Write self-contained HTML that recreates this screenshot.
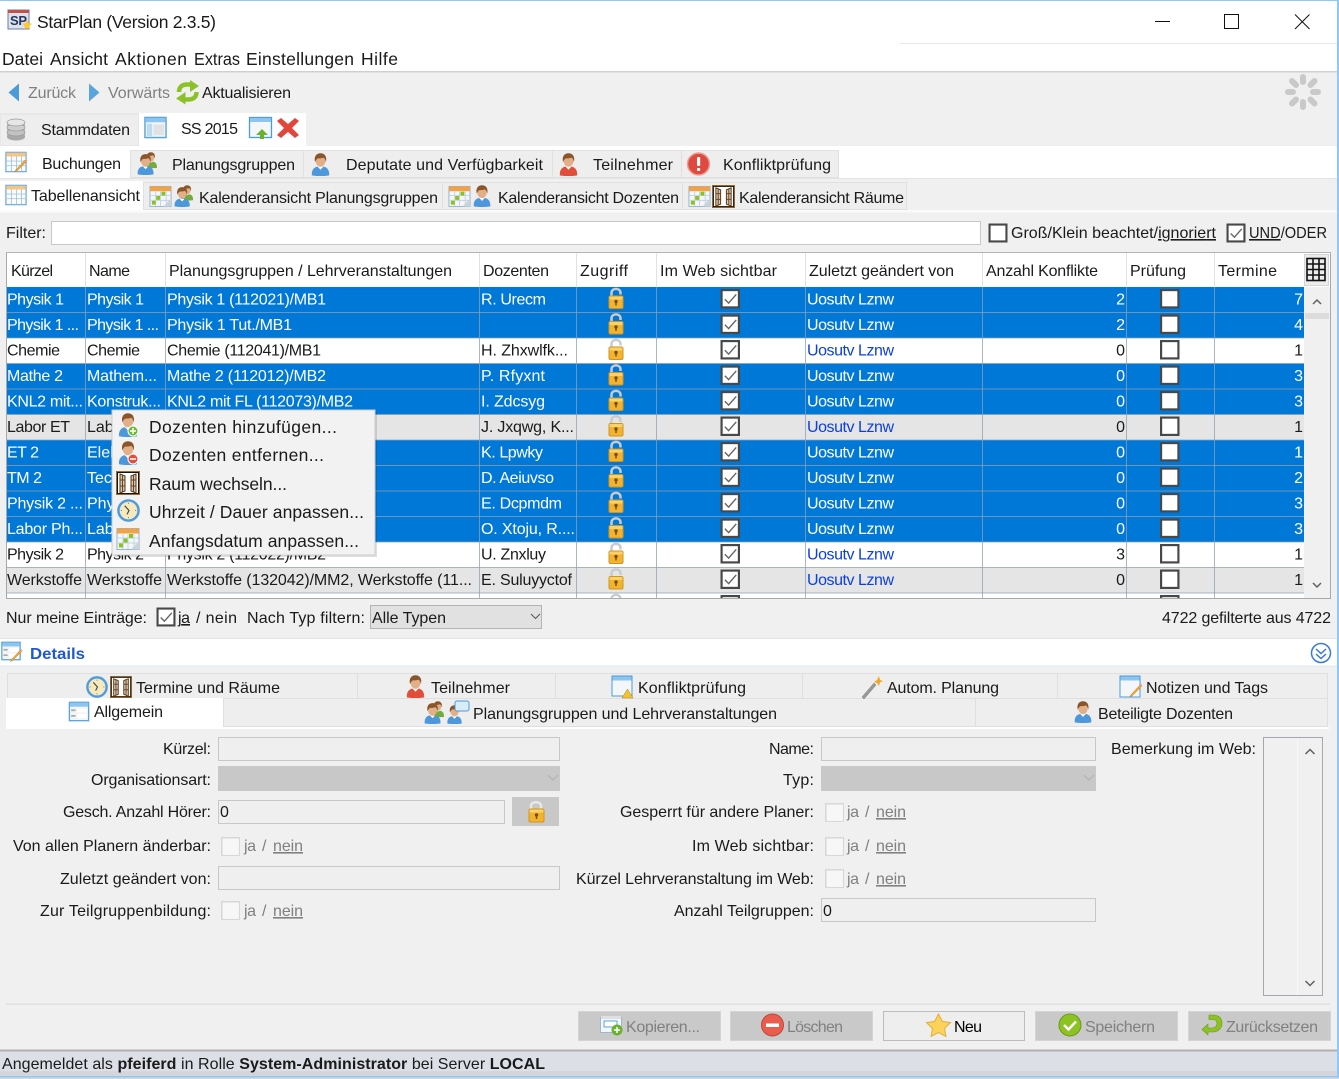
<!DOCTYPE html>
<html lang="de"><head><meta charset="utf-8"><title>StarPlan (Version 2.3.5)</title>
<style>
html,body{margin:0;padding:0;background:#f0f0f0;width:1339px;height:1079px;overflow:hidden}
svg{display:block}
text{font-family:"Liberation Sans",sans-serif;font-size:16px;fill:#1a1a1a}
.w text{fill:#fff}
.w .lk{fill:#fff}
.lk{fill:#0a3fe0}
.g{fill:#808080}
.u{text-decoration:underline}
</style></head><body>
<svg width="1339" height="1079" viewBox="0 0 1339 1079" xmlns="http://www.w3.org/2000/svg">
<defs>
<symbol id="head" viewBox="0 0 24 24"><ellipse cx="12" cy="8" rx="5.200" ry="6.300" fill="#e2b088"/><path d="M6.300 9.500C4.800 2.500 8.800 .3 12 .3s7.200 2.200 5.700 9.200c-.4-2.200-1.200-4-2.600-4.700-2 .8-4 .9-5.800.8C8 6.300 6.900 7.600 6.300 9.500z" fill="#8a5529"/></symbol>
<symbol id="pb" viewBox="0 0 24 24"><path d="M3 23.300c-.5-5.500 2.200-8.600 5.800-9.100 2 1.500 4.400 1.500 6.400 0 3.600.5 6.300 3.600 5.800 9.100-4.500 1-13.500 1-18 0z" fill="#4d98dc"/><path d="M9.300 14.500l2.700 3 2.700-3z" fill="#fff"/><use href="#head" width="24" height="24"/></symbol>
<symbol id="pr" viewBox="0 0 24 24"><path d="M3 23.300c-.5-5.500 2.200-8.600 5.800-9.100 2 1.500 4.400 1.500 6.400 0 3.600.5 6.300 3.600 5.800 9.100-4.500 1-13.500 1-18 0z" fill="#e04f3c"/><path d="M9.300 14.500l2.700 3 2.700-3z" fill="#fff"/><use href="#head" width="24" height="24"/></symbol>
<symbol id="pg" viewBox="0 0 24 24"><path d="M3 23.300c-.5-5.500 2.200-8.600 5.800-9.100 2 1.500 4.400 1.500 6.400 0 3.600.5 6.300 3.600 5.800 9.100-4.500 1-13.500 1-18 0z" fill="#74ab3c"/><use href="#head" width="24" height="24"/></symbol>
<symbol id="grp" viewBox="0 0 24 24"><use href="#pg" x="7" y="0" width="17" height="17"/><use href="#pb" x="-1" y="2" width="22" height="22"/></symbol>
<symbol id="cal" viewBox="0 0 24 24"><rect x="1" y="1.500" width="22" height="21" fill="#f4f6f8" stroke="#8fb4d4"/><rect x="1" y="1.500" width="22" height="5" fill="#f2a244"/><path d="M1 11h22M1 16h22M7 6v16M12 6v16M18 6v16" stroke="#c4d4e4" fill="none"/><rect x="7.500" y="11.500" width="4" height="4" fill="#8cc21e"/><rect x="13" y="7" width="4" height="4" fill="#8cc21e"/><rect x="3" y="16.500" width="4" height="4" fill="#8cc21e"/><path d="M23 14v8.500h-8z" fill="#c9d3da"/></symbol>
<symbol id="tbl" viewBox="0 0 24 24"><rect x="1" y="1.500" width="22" height="21" fill="#fbfcfd" stroke="#7fb0d8" stroke-width="1.500"/><rect x="1.500" y="2" width="21" height="4" fill="#f3c686"/><path d="M1 11h22M1 16h22M7 6v16M12.500 6v16M18 6v16" stroke="#a8c6e0" fill="none"/></symbol>
<symbol id="win" viewBox="0 0 24 24"><rect x="1" y="1.500" width="22" height="21" fill="#f2f4f6" stroke="#5aa4dc" stroke-width="1.500"/><rect x="1.500" y="2" width="21" height="4.500" fill="#8cc6f0"/><rect x="3" y="8" width="5.500" height="13" fill="#bcdcf4"/><rect x="10" y="9" width="11" height="11" fill="#e0e2e4"/></symbol>
<symbol id="form" viewBox="0 0 24 24"><rect x="1" y="1.500" width="22" height="21" fill="#f2f4f6" stroke="#5aa4dc" stroke-width="1.500"/><rect x="1.500" y="2" width="21" height="4.500" fill="#8cc6f0"/><rect x="10" y="8.500" width="11" height="4.500" fill="#fff"/><rect x="10" y="15" width="11" height="4.500" fill="#fff"/><path d="M3 10.500h5M3 17h5" stroke="#aaa" stroke-width="2"/></symbol>
<symbol id="door" viewBox="0 0 24 24"><rect x="1" y="1" width="22" height="22" fill="#fff" stroke="#141414" stroke-width="2"/><rect x=".5" y=".5" width="23" height="23" fill="none" stroke="#9c6a2a"/><path d="M4 3l5 2v15l-5 2zM20 3l-5 2v15l5 2z" fill="#d4c4b0" stroke="#5a3414"/><path d="M6.500 4v17M17.500 4v17M4 9h5M4 15h5M15 9h5M15 15h5" stroke="#6a4420"/></symbol>
<symbol id="clk" viewBox="0 0 24 24"><circle cx="12" cy="12" r="10.500" fill="#f6e9bc" stroke="#4f9be0" stroke-width="2.600"/><path d="M8 7l4.500 5-2 4" stroke="#444" stroke-width="1.200" fill="none"/><circle cx="12" cy="4.500" r=".6" fill="#777"/><circle cx="19.500" cy="12" r=".6" fill="#777"/><circle cx="12" cy="19.500" r=".6" fill="#777"/><circle cx="4.500" cy="12" r=".6" fill="#777"/></symbol>
<symbol id="lock" viewBox="0 0 16 22"><path d="M3.500 10V6c0-5.500 9-5.500 9 0v1.500" fill="none" stroke="#c8ccd0" stroke-width="2.500"/><rect x="1" y="9" width="14" height="12.500" rx="1.500" fill="#f2b32e" stroke="#d29320"/><rect x="1.500" y="9.500" width="13" height="3" fill="#fad26a"/><circle cx="8" cy="14.500" r="1.700" fill="#7a4a08"/><rect x="7.300" y="15" width="1.400" height="3.500" fill="#7a4a08"/></symbol>
<symbol id="cb" viewBox="0 0 18 18"><rect x="1" y="1" width="16" height="16" fill="#fff" stroke="#484848" stroke-width="2"/></symbol>
<symbol id="cc" viewBox="0 0 18 18"><rect x="1" y="1" width="16" height="16" fill="#fff" stroke="#484848" stroke-width="2"/><path d="M4 9.500l3.500 3.500 7-8" fill="none" stroke="#666" stroke-width="1.300"/></symbol>
<symbol id="cd" viewBox="0 0 18 18"><rect x=".75" y=".75" width="17" height="17" fill="#f7f7f7" stroke="#d8d8d8" stroke-width="1.500"/></symbol>
<symbol id="pen" viewBox="0 0 24 24"><path d="M8 21l-2 3 3.500-1.500L22 10l-2-2z" fill="#f4a62e" stroke="#b87818" stroke-width=".6"/><path d="M20 8l2 2 1.500-1.500-2-2z" fill="#e8a0c8"/></symbol>
</defs>

<!-- window chrome -->
<rect width="1339" height="1079" fill="#f0f0f0"/>
<rect y="1" width="1337" height="70" fill="#fff"/>
<rect x="900" y="43" width="437" height="1" fill="#e8e8e8"/>
<rect y="71" width="1337" height="1.500" fill="#cfcfcf"/>
<rect width="1339" height="1" fill="#8cc8fa"/>
<rect x="1337" y="0" width="2" height="1079" fill="#8cc8fa"/>

<!-- title -->
<rect x="8" y="10" width="21" height="19" fill="#dde3ee" stroke="#6c7da0"/>
<rect x="8" y="10" width="21" height="3" fill="#c4504a"/>
<text x="10" y="25" style="font-size:13px;font-weight:bold;fill:#28365e" textLength="17">SP</text>
<path d="M27 20l1.600 3.200 3.400.4-2.500 2.300.7 3.400-3.200-1.700-3 1.700.6-3.400-2.500-2.300 3.400-.4z" fill="#fac832"/>
<text x="37" y="28" style="font-size:17.500px" textLength="179">StarPlan (Version 2.3.5)</text>
<path d="M1155 21.500h15" stroke="#111" fill="none"/>
<rect x="1224.500" y="14.500" width="14" height="14" fill="none" stroke="#111"/>
<path d="M1295 14.500l14.500 14.500M1309.500 14.500l-14.500 14.500" stroke="#111" fill="none"/>

<!-- menu -->
<text x="2" y="65" textLength="41" style="font-size:17.500px">Datei</text>
<text x="50" y="65" textLength="58" style="font-size:17.500px">Ansicht</text>
<text x="115" y="65" textLength="72" style="font-size:17.500px">Aktionen</text>
<text x="194" y="65" textLength="46" lengthAdjust="spacingAndGlyphs" style="font-size:17.500px">Extras</text>
<text x="246" y="65" textLength="108" style="font-size:17.500px">Einstellungen</text>
<text x="361" y="65" textLength="37" style="font-size:17.500px">Hilfe</text>

<!-- toolbar -->
<path d="M19 83.500v18L8.500 92.500z" fill="#4c9bd8"/>
<text x="28" y="98" class="g" textLength="48">Zurück</text>
<path d="M89 83.500v18l10.500-9z" fill="#5ba5de"/>
<text x="108" y="98" class="g" textLength="62">Vorwärts</text>
<path d="M179 92c0-5 3-7.500 8-7.500h4" fill="none" stroke="#8cc228" stroke-width="4.500"/>
<path d="M190 80l9 6-9 6z" fill="#8cc228"/>
<path d="M196.500 92c0 5-3 7.500-8 7.500h-4" fill="none" stroke="#8cc228" stroke-width="4.500"/>
<path d="M185.500 92l-9.500 6.500 9.500 6z" fill="#8cc228"/>
<text x="202" y="98" textLength="89">Aktualisieren</text>
<g stroke="#c9c9c9" stroke-width="6" stroke-linecap="round" fill="none">
<path d="M1303 77v5M1303 102v5M1288 92h5M1313 92h5M1292 81l4 4M1310.500 99.500l4 4M1292 103.500l4-4M1310.500 85l4-4"/>
</g>

<!-- tab row 1 -->
<rect x="0" y="114" width="139" height="32" fill="#eee" stroke="#e0e0e0"/>
<rect x="139" y="113" width="167" height="33" fill="#fff"/>
<rect x="7" y="123" width="18" height="14" fill="#b8b8b8"/>
<ellipse cx="16" cy="137" rx="9" ry="3.500" fill="#a8a8a8"/>
<ellipse cx="16" cy="132.500" rx="9" ry="3.500" fill="#c2c2c2" stroke="#999" stroke-width=".7"/>
<ellipse cx="16" cy="127.500" rx="9" ry="3.500" fill="#cdcdcd" stroke="#999" stroke-width=".7"/>
<ellipse cx="16" cy="122.500" rx="9" ry="3.500" fill="#e6e6e6" stroke="#999" stroke-width=".7"/>
<text x="41" y="135" textLength="89">Stammdaten</text>
<use href="#win" x="144" y="116" width="23" height="23"/>
<text x="181" y="134" textLength="57">SS 2015</text>
<rect x="249.500" y="117.500" width="22" height="20" fill="#f4f7fa" stroke="#4d9bdc" stroke-width="1.300"/><rect x="250" y="118" width="21" height="4" fill="#8cc6f0"/><path d="M260 139v-4h-4l6-6 6 6h-4v4z" fill="#6cb12e"/>
<path d="M281 118l7 6 7-6 4 3-7 7 7 7-4 3-7-6-7 6-4-3 7-7-7-7z" fill="#e0463c"/>

<!-- tab row 2 -->
<rect x="0" y="146" width="1337" height="32" fill="#fff"/>
<rect x="0" y="178" width="1337" height="1" fill="#e4e4e4"/>
<g fill="#eee" stroke="#e0e0e0">
<rect x="130.500" y="150.500" width="173" height="27"/><rect x="303.500" y="150.500" width="249" height="27"/><rect x="552.500" y="150.500" width="129" height="27"/><rect x="681.500" y="150.500" width="157" height="27"/>
</g>
<use href="#tbl" x="5" y="151" width="22" height="22"/><use href="#pen" x="10" y="152" width="18" height="22"/>
<text x="42" y="169" textLength="79">Buchungen</text>
<use href="#grp" x="136" y="152" width="23" height="23"/>
<text x="172" y="170" textLength="123">Planungsgruppen</text>
<use href="#pb" x="309" y="153" width="23" height="23"/>
<text x="346" y="170" textLength="197">Deputate und Verfügbarkeit</text>
<use href="#pr" x="557" y="153" width="23" height="23"/>
<text x="593" y="170" textLength="80">Teilnehmer</text>
<circle cx="698.500" cy="164" r="11" fill="#e0493e" stroke="#e8a098" stroke-width="1.500"/><rect x="697" y="157" width="3.200" height="9" rx="1" fill="#fff"/><rect x="697" y="168" width="3.200" height="3" rx="1" fill="#fff"/>
<text x="723" y="170" textLength="108">Konfliktprüfung</text>

<!-- tab row 3 -->
<rect x="0" y="181" width="143" height="29" fill="#fff"/>
<g fill="#eee" stroke="#e0e0e0">
<rect x="143.500" y="182.500" width="299" height="27"/><rect x="442.500" y="182.500" width="240" height="27"/><rect x="682.500" y="182.500" width="224" height="27"/>
</g>
<rect y="210" width="1337" height="2.500" fill="#fafafa"/>
<use href="#tbl" x="5" y="184" width="22" height="22"/>
<text x="31" y="201" textLength="109">Tabellenansicht</text>
<use href="#cal" x="149" y="185" width="23" height="23"/><use href="#grp" x="173" y="185" width="22" height="22"/>
<text x="199" y="203" textLength="239">Kalenderansicht Planungsgruppen</text>
<use href="#cal" x="448" y="185" width="23" height="23"/><use href="#pb" x="471" y="185" width="22" height="22"/>
<text x="498" y="203" textLength="181">Kalenderansicht Dozenten</text>
<use href="#cal" x="688" y="185" width="23" height="23"/><use href="#door" x="712" y="185" width="23" height="23"/>
<text x="739" y="203" textLength="165">Kalenderansicht Räume</text>

<!-- filter -->
<text x="6" y="238" textLength="40">Filter:</text>
<rect x="51.500" y="221.500" width="929" height="23" fill="#fff" stroke="#c8c8c8"/>
<use href="#cb" x="988.500" y="223.500" width="19" height="19"/>
<text x="1011" y="238" textLength="205">Groß/Klein beachtet/<tspan class="u">ignoriert</tspan></text>
<use href="#cc" x="1226.500" y="223.500" width="19" height="19"/>
<text x="1249" y="238" textLength="78" lengthAdjust="spacingAndGlyphs"><tspan class="u">UND</tspan>/ODER</text>

<!-- table -->
<rect x="6" y="252.500" width="1325" height="346" fill="#fff"/>
<rect x="6" y="253" width="1298" height="34" fill="#fff"/>
<g stroke="#e2e2e2"><path d="M85.500 253v34M165.500 253v34M479.500 253v34M576.500 253v34M656.500 253v34M805.500 253v34M982.500 253v34M1126.500 253v34M1214.500 253v34"/></g>
<text x="11" y="276" textLength="42">Kürzel</text>
<text x="89" y="276" textLength="41">Name</text>
<text x="169" y="276" textLength="283">Planungsgruppen / Lehrveranstaltungen</text>
<text x="483" y="276" textLength="66">Dozenten</text>
<text x="580" y="276" textLength="48">Zugriff</text>
<text x="660" y="276" textLength="117">Im Web sichtbar</text>
<text x="809" y="276" textLength="145">Zuletzt geändert von</text>
<text x="986" y="276" textLength="112">Anzahl Konflikte</text>
<text x="1130" y="276" textLength="56">Prüfung</text>
<text x="1218" y="276" textLength="59">Termine</text>

<!-- rows -->
<g transform="translate(0,287)" class="w"><rect x="7" width="1297" height="25.500" fill="#0078d7"/><text x="7" y="17.500" textLength="57">Physik 1</text><text x="87" y="17.500" textLength="57">Physik 1</text><text x="167" y="17.500" textLength="159">Physik 1 (112021)/MB1</text><text x="481" y="17.500" textLength="65">R. Urecm</text><use href="#lock" x="608" y="0" width="16" height="22"/><use href="#cc" x="720.500" y="2" width="19.500" height="19.500"/><text x="807" y="17.500" class="lk" textLength="87">Uosutv Lznw</text><text x="1125" y="17.500" text-anchor="end">2</text><use href="#cb" x="1160" y="2" width="19.500" height="19.500"/><text x="1303" y="17.500" text-anchor="end">7</text></g>
<g transform="translate(0,312.500)" class="w"><rect x="7" width="1297" height="25.500" fill="#0078d7"/><text x="7" y="17.500" textLength="72">Physik 1 ...</text><text x="87" y="17.500" textLength="72">Physik 1 ...</text><text x="167" y="17.500" textLength="125">Physik 1 Tut./MB1</text><use href="#lock" x="608" y="0" width="16" height="22"/><use href="#cc" x="720.500" y="2" width="19.500" height="19.500"/><text x="807" y="17.500" class="lk" textLength="87">Uosutv Lznw</text><text x="1125" y="17.500" text-anchor="end">2</text><use href="#cb" x="1160" y="2" width="19.500" height="19.500"/><text x="1303" y="17.500" text-anchor="end">4</text></g>
<g transform="translate(0,338)"><rect x="7" width="1297" height="25.500" fill="#fff"/><text x="7" y="17.500" textLength="53">Chemie</text><text x="87" y="17.500" textLength="53">Chemie</text><text x="167" y="17.500" textLength="154">Chemie (112041)/MB1</text><text x="481" y="17.500" textLength="87">H. Zhxwlfk...</text><use href="#lock" x="608" y="0" width="16" height="22"/><use href="#cc" x="720.500" y="2" width="19.500" height="19.500"/><text x="807" y="17.500" class="lk" textLength="87">Uosutv Lznw</text><text x="1125" y="17.500" text-anchor="end">0</text><use href="#cb" x="1160" y="2" width="19.500" height="19.500"/><text x="1303" y="17.500" text-anchor="end">1</text></g>
<g transform="translate(0,363.500)" class="w"><rect x="7" width="1297" height="25.500" fill="#0078d7"/><text x="7" y="17.500" textLength="56">Mathe 2</text><text x="87" y="17.500" textLength="70">Mathem...</text><text x="167" y="17.500" textLength="159">Mathe 2 (112012)/MB2</text><text x="481" y="17.500" textLength="64">P. Rfyxnt</text><use href="#lock" x="608" y="0" width="16" height="22"/><use href="#cc" x="720.500" y="2" width="19.500" height="19.500"/><text x="807" y="17.500" class="lk" textLength="87">Uosutv Lznw</text><text x="1125" y="17.500" text-anchor="end">0</text><use href="#cb" x="1160" y="2" width="19.500" height="19.500"/><text x="1303" y="17.500" text-anchor="end">3</text></g>
<g transform="translate(0,389)" class="w"><rect x="7" width="1297" height="25.500" fill="#0078d7"/><text x="7" y="17.500" textLength="76">KNL2 mit...</text><text x="87" y="17.500" textLength="74">Konstruk...</text><text x="167" y="17.500" textLength="186">KNL2 mit FL (112073)/MB2</text><text x="481" y="17.500" textLength="64">I. Zdcsyg</text><use href="#lock" x="608" y="0" width="16" height="22"/><use href="#cc" x="720.500" y="2" width="19.500" height="19.500"/><text x="807" y="17.500" class="lk" textLength="87">Uosutv Lznw</text><text x="1125" y="17.500" text-anchor="end">0</text><use href="#cb" x="1160" y="2" width="19.500" height="19.500"/><text x="1303" y="17.500" text-anchor="end">3</text></g>
<g transform="translate(0,414.500)"><rect x="7" width="1297" height="25.500" fill="#e5e5e5"/><text x="7" y="17.500" textLength="63">Labor ET</text><text x="87" y="17.500">Lab</text><text x="481" y="17.500" textLength="93">J. Jxqwg, K...</text><use href="#lock" x="608" y="0" width="16" height="22"/><use href="#cc" x="720.500" y="2" width="19.500" height="19.500"/><text x="807" y="17.500" class="lk" textLength="87">Uosutv Lznw</text><text x="1125" y="17.500" text-anchor="end">0</text><use href="#cb" x="1160" y="2" width="19.500" height="19.500"/><text x="1303" y="17.500" text-anchor="end">1</text></g>
<g transform="translate(0,440)" class="w"><rect x="7" width="1297" height="25.500" fill="#0078d7"/><text x="7" y="17.500" textLength="32">ET 2</text><text x="87" y="17.500">Elek</text><text x="481" y="17.500" textLength="62">K. Lpwky</text><use href="#lock" x="608" y="0" width="16" height="22"/><use href="#cc" x="720.500" y="2" width="19.500" height="19.500"/><text x="807" y="17.500" class="lk" textLength="87">Uosutv Lznw</text><text x="1125" y="17.500" text-anchor="end">0</text><use href="#cb" x="1160" y="2" width="19.500" height="19.500"/><text x="1303" y="17.500" text-anchor="end">1</text></g>
<g transform="translate(0,465.500)" class="w"><rect x="7" width="1297" height="25.500" fill="#0078d7"/><text x="7" y="17.500" textLength="35">TM 2</text><text x="87" y="17.500">Tec</text><text x="481" y="17.500" textLength="73">D. Aeiuvso</text><use href="#lock" x="608" y="0" width="16" height="22"/><use href="#cc" x="720.500" y="2" width="19.500" height="19.500"/><text x="807" y="17.500" class="lk" textLength="87">Uosutv Lznw</text><text x="1125" y="17.500" text-anchor="end">0</text><use href="#cb" x="1160" y="2" width="19.500" height="19.500"/><text x="1303" y="17.500" text-anchor="end">2</text></g>
<g transform="translate(0,491)" class="w"><rect x="7" width="1297" height="25.500" fill="#0078d7"/><text x="7" y="17.500" textLength="76">Physik 2 ...</text><text x="87" y="17.500">Phy</text><text x="481" y="17.500" textLength="81">E. Dcpmdm</text><use href="#lock" x="608" y="0" width="16" height="22"/><use href="#cc" x="720.500" y="2" width="19.500" height="19.500"/><text x="807" y="17.500" class="lk" textLength="87">Uosutv Lznw</text><text x="1125" y="17.500" text-anchor="end">0</text><use href="#cb" x="1160" y="2" width="19.500" height="19.500"/><text x="1303" y="17.500" text-anchor="end">3</text></g>
<g transform="translate(0,516.500)" class="w"><rect x="7" width="1297" height="25.500" fill="#0078d7"/><text x="7" y="17.500" textLength="76">Labor Ph...</text><text x="87" y="17.500">Lab</text><text x="481" y="17.500" textLength="94">O. Xtoju, R....</text><use href="#lock" x="608" y="0" width="16" height="22"/><use href="#cc" x="720.500" y="2" width="19.500" height="19.500"/><text x="807" y="17.500" class="lk" textLength="87">Uosutv Lznw</text><text x="1125" y="17.500" text-anchor="end">0</text><use href="#cb" x="1160" y="2" width="19.500" height="19.500"/><text x="1303" y="17.500" text-anchor="end">3</text></g>
<g transform="translate(0,542)"><rect x="7" width="1297" height="25.500" fill="#fff"/><text x="7" y="17.500" textLength="57">Physik 2</text><text x="87" y="17.500" textLength="57">Physik 2</text><text x="167" y="17.500" textLength="159">Physik 2 (112022)/MB2</text><text x="481" y="17.500" textLength="65">U. Znxluy</text><use href="#lock" x="608" y="0" width="16" height="22"/><use href="#cc" x="720.500" y="2" width="19.500" height="19.500"/><text x="807" y="17.500" class="lk" textLength="87">Uosutv Lznw</text><text x="1125" y="17.500" text-anchor="end">3</text><use href="#cb" x="1160" y="2" width="19.500" height="19.500"/><text x="1303" y="17.500" text-anchor="end">1</text></g>
<g transform="translate(0,567.500)"><rect x="7" width="1297" height="25.500" fill="#e5e5e5"/><text x="7" y="17.500" textLength="75">Werkstoffe</text><text x="87" y="17.500" textLength="75">Werkstoffe</text><text x="167" y="17.500" textLength="305">Werkstoffe (132042)/MM2, Werkstoffe (11...</text><text x="481" y="17.500" textLength="91">E. Suluyyctof</text><use href="#lock" x="608" y="0" width="16" height="22"/><use href="#cc" x="720.500" y="2" width="19.500" height="19.500"/><text x="807" y="17.500" class="lk" textLength="87">Uosutv Lznw</text><text x="1125" y="17.500" text-anchor="end">0</text><use href="#cb" x="1160" y="2" width="19.500" height="19.500"/><text x="1303" y="17.500" text-anchor="end">1</text></g>
<svg x="7" y="593" width="1297" height="5" viewBox="7 593 1297 5"><use href="#lock" x="608" y="593" width="16" height="22"/><use href="#cb" x="720.500" y="595" width="19.500" height="19.500"/><use href="#cb" x="1160" y="595" width="19.500" height="19.500"/></svg>

<!-- grid lines -->
<g stroke="#8f9fb0" stroke-opacity=".75" fill="none">
<path d="M85.500 287v311M165.500 287v311M479.500 287v311M576.500 287v311M656.500 287v311M805.500 287v311M982.500 287v311M1126.500 287v311M1214.500 287v311"/>
<path d="M7 312.500h1297M7 338h1297M7 363.500h1297M7 389h1297M7 414.500h1297M7 440h1297M7 465.500h1297M7 491h1297M7 516.500h1297M7 542h1297M7 567.500h1297M7 593h1297"/>
</g>

<!-- table scrollbar + frame -->
<rect x="1304" y="287" width="26" height="311" fill="#f0f0f0"/>
<rect x="1305" y="313" width="24" height="6" fill="#dcdcdc"/>
<path d="M1313 304l4-4 4 4M1313 583l4 4 4-4" stroke="#606060" stroke-width="1.500" fill="none"/>
<rect x="1304.500" y="254.500" width="24" height="31" fill="#ececec" stroke="#d4d4d4"/>
<g stroke="#111" stroke-width="1.600" fill="none"><rect x="1307" y="258.500" width="18" height="22"/><path d="M1307 264h18M1307 269.500h18M1307 275h18M1313 258.500v22M1319 258.500v22"/></g>
<rect x="6.500" y="252.500" width="1324" height="346" fill="none" stroke="#a8a8a8"/>
<rect x="6" y="252" width="1325" height="1" fill="#b4b4b4"/>

<!-- context menu -->
<rect x="114" y="412" width="263" height="145" fill="#000" fill-opacity=".12"/>
<rect x="112" y="410" width="263" height="145" fill="#f2f2f2" stroke="#cccccc"/>
<use href="#pb" x="116" y="413" width="24" height="24"/><circle cx="133" cy="431" r="5" fill="#6cb830" stroke="#fff"/><path d="M130 431h6M133 428v6" stroke="#fff" stroke-width="1.500"/>
<text x="149" y="433" style="font-size:17.500px" textLength="188">Dozenten hinzufügen...</text>
<use href="#pb" x="116" y="441" width="24" height="24"/><circle cx="133" cy="459" r="5" fill="#e04f3c" stroke="#fff"/><path d="M130 459h6" stroke="#fff" stroke-width="1.500"/>
<text x="149" y="461" style="font-size:17.500px" textLength="175">Dozenten entfernen...</text>
<use href="#door" x="116" y="471" width="24" height="24"/>
<text x="149" y="490" style="font-size:17.500px" textLength="138">Raum wechseln...</text>
<use href="#clk" x="117" y="499" width="23" height="23"/>
<text x="149" y="518" style="font-size:17.500px" textLength="215">Uhrzeit / Dauer anpassen...</text>
<use href="#cal" x="116" y="527" width="24" height="24"/>
<text x="149" y="547" style="font-size:17.500px" textLength="210">Anfangsdatum anpassen...</text>

<!-- below table -->
<text x="6" y="623" textLength="141">Nur meine Einträge:</text>
<use href="#cc" x="156.500" y="607.500" width="19" height="19"/>
<text x="178" y="623" textLength="12" class="u">ja</text>
<text x="196" y="623" textLength="41">/ nein</text>
<text x="247" y="623" textLength="118">Nach Typ filtern:</text>
<rect x="370.500" y="605.500" width="171" height="23" fill="#e1e1e1" stroke="#b4b4b4"/>
<text x="372" y="623" textLength="74">Alle Typen</text>
<path d="M531 614l4.500 4.500 4.500-4.500" stroke="#555" fill="none"/>
<text x="1162" y="623" textLength="169">4722 gefilterte aus 4722</text>

<!-- details header -->
<rect x="0" y="639" width="1337" height="26.500" fill="#fff"/>
<rect x="0" y="665.500" width="1337" height="1.200" fill="#e0e8f4"/>
<rect x="0" y="638" width="1337" height="1" fill="#e4e4e4"/>
<use href="#form" x="1" y="641" width="20" height="20"/><use href="#pen" x="6" y="642" width="17" height="22"/>
<text x="30" y="659" style="font-weight:bold;fill:#2058d2" textLength="55" lengthAdjust="spacingAndGlyphs">Details</text>
<circle cx="1321" cy="653" r="9.500" fill="#fff" stroke="#3a78dc" stroke-width="1.500"/><path d="M1316 649l5 4.500 5-4.500M1316 654l5 4.500 5-4.500" stroke="#3a78dc" stroke-width="1.500" fill="none"/>

<!-- details tabs -->
<g fill="#eee" stroke="#dfdfdf">
<rect x="7.500" y="673.500" width="350" height="25"/><rect x="357.500" y="673.500" width="198" height="25"/><rect x="555.500" y="673.500" width="247" height="25"/><rect x="802.500" y="673.500" width="255" height="25"/><rect x="1057.500" y="673.500" width="270" height="25"/>
<rect x="223.500" y="698.500" width="752" height="28"/><rect x="975.500" y="698.500" width="352" height="28"/>
</g>
<rect x="6" y="727" width="1323" height="2" fill="#fff"/>
<rect x="6" y="698" width="217" height="31" fill="#fff"/>
<use href="#clk" x="86" y="676" width="22" height="22"/><use href="#door" x="109" y="676" width="24" height="22"/>
<text x="136" y="693" textLength="144">Termine und Räume</text>
<use href="#pr" x="404" y="675" width="23" height="23"/>
<text x="431" y="693" textLength="79">Teilnehmer</text>
<rect x="612" y="676" width="20" height="20" fill="#f4f7fa" stroke="#4d9bdc"/><rect x="612.500" y="676.500" width="19" height="4" fill="#8cc6f0"/><path d="M627.500 689l5.500 9h-11z" fill="#f4c230" stroke="#a8801a" stroke-width=".5"/>
<text x="638" y="693" textLength="108">Konfliktprüfung</text>
<path d="M862 697l12-14 2 2-12 14z" fill="#9a9a9a" stroke="#777" stroke-width=".5"/><path d="M879 676l1 4 3 1-3 1.500-1 3.500-2-3-3-1 3-2z" fill="#f0a72c"/>
<text x="887" y="693" textLength="112">Autom. Planung</text>
<rect x="1120" y="676" width="20" height="21" fill="#f4f7fa" stroke="#4d9bdc"/><rect x="1120.500" y="676.500" width="19" height="4" fill="#8cc6f0"/><use href="#pen" x="1125" y="678" width="18" height="20"/>
<text x="1146" y="693" textLength="122">Notizen und Tags</text>
<use href="#form" x="68" y="701" width="22" height="21"/>
<text x="94" y="717" textLength="69">Allgemein</text>
<use href="#grp" x="423" y="701" width="23" height="23"/><use href="#pb" x="445" y="705" width="19" height="19"/><rect x="455" y="701" width="14" height="10" rx="2" fill="#d8ecfa" stroke="#4d9bdc"/>
<text x="473" y="719" textLength="304">Planungsgruppen und Lehrveranstaltungen</text>
<use href="#pb" x="1072" y="701" width="22" height="22"/>
<text x="1098" y="719" textLength="135">Beteiligte Dozenten</text>

<!-- form -->
<g stroke="#c8c8c8" fill="#efefef">
<rect x="218.500" y="737.500" width="341" height="23"/>
<rect x="821.500" y="737.500" width="274" height="23"/>
<rect x="218.500" y="800.500" width="286" height="23"/>
<rect x="218.500" y="866.500" width="341" height="23"/>
<rect x="821.500" y="898.500" width="274" height="23"/>
</g>
<rect x="218" y="766" width="342" height="25" fill="#c8c8c8"/>
<rect x="821" y="766" width="275" height="25" fill="#c8c8c8"/>
<path d="M548 775l5 5 5-5M1084 775l5 5 5-5" stroke="#b0b0b0" fill="none"/>
<rect x="512" y="797" width="47" height="29" fill="#c8c8c8"/>
<path d="M531 811v-5c0-5 10-5 10 0v5" fill="none" stroke="#e8e8e8" stroke-width="2.500"/>
<rect x="529" y="809" width="15" height="13" rx="1.500" fill="#f2b32e" stroke="#d29320"/><rect x="529.500" y="809.500" width="14" height="3" fill="#fad26a"/><circle cx="536.500" cy="815" r="1.700" fill="#7a4a08"/><rect x="535.800" y="815.500" width="1.400" height="3.500" fill="#7a4a08"/>

<text x="163" y="754" textLength="48">Kürzel:</text>
<text x="91" y="785" textLength="120">Organisationsart:</text>
<text x="63" y="817" textLength="148">Gesch. Anzahl Hörer:</text>
<text x="220" y="817">0</text>
<text x="13" y="851" textLength="198">Von allen Planern änderbar:</text>
<text x="60" y="884" textLength="151">Zuletzt geändert von:</text>
<text x="40" y="916" textLength="171">Zur Teilgruppenbildung:</text>
<use href="#cd" x="221" y="837" width="19" height="19"/>
<text x="244" y="851" class="g" textLength="12">ja</text><text x="262" y="851" class="g">/</text><text x="273" y="851" class="g u" textLength="30">nein</text>
<use href="#cd" x="221" y="901" width="19" height="19"/>
<text x="244" y="916" class="g" textLength="12">ja</text><text x="262" y="916" class="g">/</text><text x="273" y="916" class="g u" textLength="30">nein</text>

<text x="769" y="754" textLength="45">Name:</text>
<text x="783" y="785" textLength="31">Typ:</text>
<text x="620" y="817" textLength="194">Gesperrt für andere Planer:</text>
<text x="692" y="851" textLength="122">Im Web sichtbar:</text>
<text x="576" y="884" textLength="238">Kürzel Lehrveranstaltung im Web:</text>
<text x="674" y="916" textLength="140">Anzahl Teilgruppen:</text>
<text x="823" y="916">0</text>
<use href="#cd" x="825" y="803" width="19" height="19"/>
<text x="847" y="817" class="g" textLength="12">ja</text><text x="865" y="817" class="g">/</text><text x="876" y="817" class="g u" textLength="30">nein</text>
<use href="#cd" x="825" y="837" width="19" height="19"/>
<text x="847" y="851" class="g" textLength="12">ja</text><text x="865" y="851" class="g">/</text><text x="876" y="851" class="g u" textLength="30">nein</text>
<use href="#cd" x="825" y="869" width="19" height="19"/>
<text x="847" y="884" class="g" textLength="12">ja</text><text x="865" y="884" class="g">/</text><text x="876" y="884" class="g u" textLength="30">nein</text>

<text x="1111" y="754" textLength="145">Bemerkung im Web:</text>
<rect x="1263.500" y="737.500" width="59" height="258" fill="#f0f0f0" stroke="#a6a6ae"/>
<rect x="1297" y="738" width="1" height="257" fill="#f8f8f8"/>
<path d="M1305.500 754l4.500-4.500 4.500 4.500M1305.500 981l4.500 4.500 4.500-4.500" stroke="#606060" stroke-width="1.500" fill="none"/>

<rect x="6" y="1003.500" width="1324" height="1.200" fill="#dcdcdc"/>

<!-- buttons -->
<rect x="578.500" y="1011.500" width="142" height="29" fill="#c9c9c9" stroke="#d4d4d4"/>
<rect x="730.500" y="1011.500" width="142" height="29" fill="#c9c9c9" stroke="#d4d4d4"/>
<rect x="883.500" y="1011.500" width="141" height="29" fill="#eee" stroke="#bcbcbc"/>
<rect x="1035.500" y="1011.500" width="142" height="29" fill="#c9c9c9" stroke="#d4d4d4"/>
<rect x="1188.500" y="1011.500" width="142" height="29" fill="#c9c9c9" stroke="#d4d4d4"/>
<rect x="600.500" y="1017.500" width="21" height="15" fill="#f4f7fa" stroke="#9ab8d4"/><rect x="601" y="1016" width="20" height="3" fill="#e0e0e0"/><rect x="604" y="1021" width="13" height="6" fill="#fff" stroke="#5aa4dc"/><circle cx="617" cy="1030" r="5.500" fill="#6cb12e"/><path d="M614 1030h6M617 1027v6" stroke="#fff" stroke-width="1.500"/>
<text x="626" y="1032" class="g" textLength="74">Kopieren...</text>
<circle cx="772.500" cy="1025" r="11" fill="#ea5c4e" stroke="#b84a3c"/><rect x="766" y="1023.500" width="13" height="3.500" fill="#fff"/>
<text x="787" y="1032" class="g" textLength="56">Löschen</text>
<path d="M938.500 1014l3.800 7.400 8.200 1.200-6 5.800 1.400 8.100-7.400-3.900-7.400 3.900 1.400-8.100-6-5.800 8.200-1.200z" fill="#fcd35a" stroke="#e2ae3a"/>
<text x="954" y="1032" style="fill:#000" textLength="28">Neu</text>
<circle cx="1070" cy="1025" r="11" fill="#8cc222" stroke="#6a9a18"/><path d="M1064 1025l4.500 4.500 7.500-8" stroke="#fff" stroke-width="2.500" fill="none"/>
<text x="1085" y="1032" class="g" textLength="70">Speichern</text>
<path d="M1209 1015h4c6 0 9 3.500 9 8s-3 9-9 9h-5v3l-6-5.500 6-5.500v4h4c3 0 5-2 5-4.500s-2-4-5-4h-3z" fill="#8cc222" stroke="#6a9a18" stroke-width=".6"/>
<text x="1226" y="1032" class="g" textLength="92">Zurücksetzen</text>

<!-- status bar -->
<rect x="0" y="1049.500" width="1337" height="2" fill="#b0b0b0"/>
<rect x="0" y="1051.500" width="1337" height="24" fill="#dcdfe5"/>
<rect x="0" y="1071" width="1337" height="5" fill="#d4d6dc"/>
<rect x="0" y="1076" width="1339" height="1.500" fill="#8cc8fa"/>
<rect x="0" y="1077.500" width="1339" height="1.500" fill="#d8d8d8"/>
<text x="2" y="1069" textLength="543">Angemeldet als <tspan style="font-weight:bold">pfeiferd</tspan> in Rolle <tspan style="font-weight:bold">System-Administrator</tspan> bei Server <tspan style="font-weight:bold">LOCAL</tspan></text>
</svg>
</body></html>
